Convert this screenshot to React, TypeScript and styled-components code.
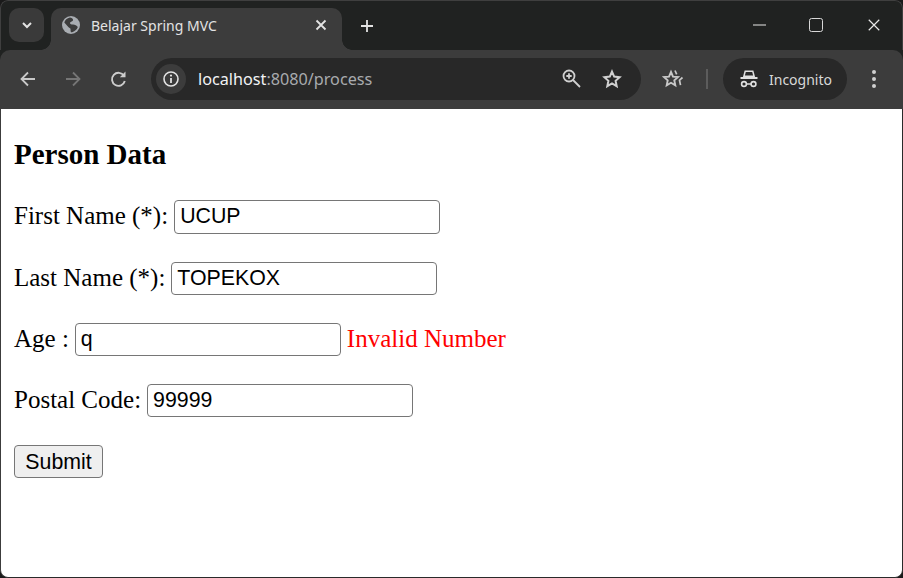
import * as React from "react";
import styled, { createGlobalStyle } from "styled-components";

const GlobalStyle = createGlobalStyle`
  html, body { margin: 0; padding: 0; height: 100%; background: #1a1a1a; overflow: hidden; }
  #root { height: 100%; }
`;

const UI_FONT = `"Noto Sans", "Open Sans", sans-serif`;

const Browser = styled.div`
  height: 578px;
  width: 903px;
  display: flex;
  flex-direction: column;
  background: #202221;
  border-radius: 8px 8px 8px 8px;
  overflow: hidden;
  box-sizing: border-box;
  font-family: ${UI_FONT};
`;

const TitleBar = styled.div`
  height: 50px;
  flex: none;
  display: flex;
  align-items: flex-start;
  padding: 8px 0 0 9px;
  box-sizing: border-box;
  background: #202221;
  border-top: 1px solid #3f3f3f;
  border-left: 1px solid #3f3f3f;
  border-right: 1px solid #3f3f3f;
  border-radius: 8px 8px 0 0;
`;

const TabSearch = styled.div`
  width: 35px;
  height: 34px;
  margin-left: -1px;
  margin-top: -1px;
  border-radius: 10px;
  background: #3a3a3a;
  display: flex;
  align-items: center;
  justify-content: center;
`;

const Tab = styled.div`
  position: relative;
  width: 291px;
  height: 42px;
  margin-left: 7px;
  margin-top: -1px;
  background: #3c3c3c;
  border-radius: 10px 10px 0 0;
  display: flex;
  align-items: center;
  padding: 0 15px 8px 11px;
  box-sizing: border-box;
  color: #e3e3e3;
  font-size: 14px;

  &::before,
  &::after {
    content: "";
    position: absolute;
    bottom: 0;
    width: 10px;
    height: 10px;
    background: radial-gradient(circle at var(--cx) 0, #202221 9.5px, #3c3c3c 10px);
  }
  &::before { left: -10px; --cx: 0; }
  &::after { right: -10px; --cx: 100%; }
`;

const TabTitle = styled.span`
  flex: 1;
  margin-left: 11px;
  white-space: nowrap;
`;

const NewTab = styled.div`
  width: 16px;
  height: 16px;
  margin: 9px 0 0 17px;
  display: flex;
`;

const WindowControls = styled.div`
  margin-left: auto;
  display: flex;
  align-items: center;
  height: 34px;
  margin-top: -1px;
  padding-right: 21px;
  gap: 42px;

  & > :last-child {
    margin-left: 2px;
  }
`;

const Toolbar = styled.div`
  height: 59px;
  flex: none;
  display: flex;
  align-items: center;
  background: #3c3c3c;
  border-radius: 10px 10px 0 0;
  padding: 0 0 1px 18px;
  box-sizing: border-box;
`;

const NavIcon = styled.div<{ $gap?: number }>`
  width: 20px;
  height: 20px;
  margin-right: ${(p) => p.$gap ?? 25}px;
  display: flex;
`;

const Omnibox = styled.div`
  width: 490px;
  height: 42px;
  border-radius: 21px;
  background: #282828;
  display: flex;
  align-items: center;
  padding: 0 19px 0 5px;
  box-sizing: border-box;
`;

const SiteInfo = styled.div`
  width: 30px;
  height: 30px;
  border-radius: 50%;
  background: #3c3c3c;
  display: flex;
  align-items: center;
  justify-content: center;
  flex: none;
`;

const Url = styled.div`
  flex: 1;
  margin-left: 12px;
  font-size: 16.2px;
  color: #a8abae;
  white-space: nowrap;
`;

const UrlHost = styled.span`
  color: #f2f3f5;
`;

const Divider = styled.div`
  width: 2px;
  height: 20px;
  background: #5c5c5c;
  margin: 0 15px 0 22px;
`;

const IncognitoPill = styled.div`
  width: 124px;
  height: 42px;
  border-radius: 21px;
  background: #282828;
  display: flex;
  align-items: center;
  padding-left: 17px;
  box-sizing: border-box;
  color: #d8d8d8;
  font-size: 14px;
  gap: 11px;
`;

const Page = styled.main`
  flex: 1;
  background: #fff;
  border-left: 1px solid #3c3c3c;
  border-right: 1px solid #2a2a2a;
  border-bottom: 1px solid #2a2a2a;
  border-radius: 0 0 8px 8px;
  padding: 0 13px;
  box-sizing: border-box;
  font-family: "Liberation Serif", serif;
  font-size: 25px;
  color: #000;
`;

const Heading = styled.h3`
  font-size: 29px;
  font-weight: bold;
  margin: 28px 0 0;
  line-height: 34px;
`;

const Row = styled.div<{ $gap: number }>`
  height: 35px;
  margin-top: ${(p) => p.$gap}px;
  padding-bottom: 2px;
  box-sizing: border-box;
  display: flex;
  align-items: center;
  white-space: pre;
`;

const TextField = styled.input<{ $tall?: boolean }>`
  width: 266px;
  height: ${(p) => (p.$tall ? 34 : 33)}px;
  box-sizing: border-box;
  margin: 2px 0 0 6px;
  padding: 1px 5px;
  border: 1px solid #767676;
  border-radius: 4px;
  background: #fff;
  font-family: "Liberation Sans", Arial, sans-serif;
  font-size: 21.33px;
  color: #000;
  outline: none;
`;

const ErrorText = styled.span`
  margin-left: 6px;
  color: #f00;
`;

const SubmitButton = styled.button`
  width: 89px;
  height: 33px;
  margin-top: 2px;
  padding: 1px 0 0;
  border: 1px solid #767676;
  border-radius: 4px;
  background: #efefef;
  font-family: "Liberation Sans", Arial, sans-serif;
  font-size: 21.33px;
  color: #000;
`;

const ToolSlot = styled.div<{ $left?: number }>`
  display: flex;
  margin-left: ${(p) => p.$left ?? 0}px;
`;

const KebabSlot = styled.div`
  display: flex;
  margin-left: 24px;
`;

const ChevronDown = () => (
  <svg width="14" height="14" viewBox="0 0 14 14" fill="none">
    <path d="M3 5l4 4 4-4" stroke="#e3e3e3" strokeWidth="2" />
  </svg>
);

const Globe = () => (
  <svg width="18" height="18" viewBox="0 0 18 18">
    <circle cx="9" cy="9" r="9" fill="#a9adb2" />
    <path d="M8 1.500C5 2 3 4 2.300 6.500l4 4.500c.7 1 2 .8 2.200 2 .2 1 0 2.500.5 3.300 3-.2 6-2.500 6.800-5.300-1-1.500-2.800-2.500-4.800-2.500-1.500 0-3-.3-3-1.500s2-1 3-2.500c.5-1-.5-2.500-3-3z" fill="#3c3c3c" />
  </svg>
);

const Close = ({ size = 12, color = "#e3e3e3", width = 1.8 }: { size?: number; color?: string; width?: number }) => (
  <svg width={size} height={size} viewBox="0 0 12 12" fill="none">
    <path d="M1.500 1.500l9 9M10.500 1.500l-9 9" stroke={color} strokeWidth={width} />
  </svg>
);

const Plus = () => (
  <svg width="16" height="16" viewBox="0 0 16 16" fill="none">
    <path d="M8 2v12M2 8h12" stroke="#e3e3e3" strokeWidth="1.8" />
  </svg>
);

const ArrowLeft = ({ color }: { color: string }) => (
  <svg width="20" height="20" viewBox="0 0 20 20" fill="none">
    <path d="M17 10H4M10 3.500L3.500 10l6.500 6.500" stroke={color} strokeWidth="1.8" />
  </svg>
);

const ArrowRight = ({ color }: { color: string }) => (
  <svg width="20" height="20" viewBox="0 0 20 20" fill="none">
    <path d="M3 10h13M10 3.500l6.500 6.500-6.500 6.500" stroke={color} strokeWidth="1.8" />
  </svg>
);

const Reload = () => (
  <svg width="20" height="20" viewBox="0 0 20 20" fill="none">
    <path d="M15.800 12a6.500 6.500 0 1 1-.8-5.200" stroke="#cdcdcd" strokeWidth="1.900" />
    <path d="M16.500 2.500v5.700h-5.700z" fill="#cdcdcd" />
  </svg>
);

const Info = () => (
  <svg width="18" height="18" viewBox="0 0 18 18" fill="none">
    <circle cx="9" cy="9" r="7" stroke="#e3e3e3" strokeWidth="1.600" />
    <path d="M9 8v5" stroke="#e3e3e3" strokeWidth="1.800" />
    <circle cx="9" cy="5.600" r="1.100" fill="#e3e3e3" />
  </svg>
);

const ZoomIn = () => (
  <svg width="20" height="20" viewBox="0 0 20 20" fill="none">
    <circle cx="7" cy="7" r="5.500" stroke="#d0d0d0" strokeWidth="1.800" />
    <path d="M11 11l7 7" stroke="#d0d0d0" strokeWidth="1.800" />
    <path d="M7 4.300v5.400M4.300 7h5.400" stroke="#d0d0d0" strokeWidth="1.800" />
  </svg>
);

const Star = () => (
  <svg width="20" height="20" viewBox="0 0 20 20" fill="none">
    <path d="M10 2.600l2.200 5 5.400.6-4 3.600 1.100 5.400L10 14.500l-4.700 2.700 1.100-5.400-4-3.600 5.400-.6z" stroke="#d0d0d0" strokeWidth="2" strokeLinejoin="miter" />
  </svg>
);

const ReadingStar = () => (
  <svg width="22" height="20" viewBox="0 0 22 20" fill="none">
    <path d="M9 3l2 4.600 5 .5-3.700 3.300 1 4.900L9 13.800l-4.300 2.500 1-4.900L2 8.100l5-.5z" stroke="#c8c8c8" strokeWidth="1.900" />
    <path d="M13 1.500l1.700 3.800M20.500 8.500l-3 2.700 1 5" stroke="#c8c8c8" strokeWidth="1.700" />
  </svg>
);

const Spy = () => (
  <svg width="18" height="18" viewBox="0 0 18 18" fill="none">
    <path d="M5.200 1.200h7.600l1.300 5H3.900z" stroke="#e0e0e0" strokeWidth="1.500" />
    <path d="M.5 8h17" stroke="#e0e0e0" strokeWidth="2" />
    <circle cx="4" cy="14" r="2.400" stroke="#e0e0e0" strokeWidth="1.600" />
    <circle cx="13.500" cy="14" r="2.400" stroke="#e0e0e0" strokeWidth="1.600" />
    <path d="M6.500 14h4.500" stroke="#e0e0e0" strokeWidth="1.500" />
  </svg>
);

const Kebab = () => (
  <svg width="6" height="20" viewBox="0 0 6 20">
    <circle cx="3" cy="3" r="2" fill="#d0d0d0" />
    <circle cx="3" cy="10" r="2" fill="#d0d0d0" />
    <circle cx="3" cy="17" r="2" fill="#d0d0d0" />
  </svg>
);

const Minimize = () => (
  <svg width="14" height="14" viewBox="0 0 14 14" fill="none">
    <path d="M0 7h13" stroke="#e8e8e8" strokeWidth="1" />
  </svg>
);

const Maximize = () => (
  <svg width="14" height="14" viewBox="0 0 14 14" fill="none">
    <rect x=".5" y=".5" width="13" height="13" rx="2" stroke="#d8d8d8" strokeWidth="1" />
  </svg>
);

export default function App() {
  return (
    <>
      <GlobalStyle />
      <Browser>
        <TitleBar>
          <TabSearch>
            <ChevronDown />
          </TabSearch>
          <Tab>
            <Globe />
            <TabTitle>Belajar Spring MVC</TabTitle>
            <Close />
          </Tab>
          <NewTab>
            <Plus />
          </NewTab>
          <WindowControls>
            <Minimize />
            <Maximize />
            <Close size={14} color="#e8e8e8" width={1} />
          </WindowControls>
        </TitleBar>
        <Toolbar>
          <NavIcon>
            <ArrowLeft color="#c8c8c8" />
          </NavIcon>
          <NavIcon $gap={26}>
            <ArrowRight color="#757575" />
          </NavIcon>
          <NavIcon $gap={22}>
            <Reload />
          </NavIcon>
          <Omnibox>
            <SiteInfo>
              <Info />
            </SiteInfo>
            <Url>
              <UrlHost>localhost</UrlHost>:8080/process
            </Url>
            <ToolSlot>
              <ZoomIn />
            </ToolSlot>
            <ToolSlot $left={20}>
              <Star />
            </ToolSlot>
          </Omnibox>
          <ToolSlot $left={21}>
            <ReadingStar />
          </ToolSlot>
          <Divider />
          <IncognitoPill>
            <Spy />
            Incognito
          </IncognitoPill>
          <KebabSlot>
            <Kebab />
          </KebabSlot>
        </Toolbar>
        <Page>
          <Heading>Person Data</Heading>
          <Row $gap={28}>
            First Name (*):<TextField $tall defaultValue="UCUP" />
          </Row>
          <Row $gap={27}>
            Last Name (*):<TextField defaultValue="TOPEKOX" />
          </Row>
          <Row $gap={26}>
            Age :<TextField defaultValue="q" />
            <ErrorText>Invalid Number</ErrorText>
          </Row>
          <Row $gap={26}>
            Postal Code:<TextField defaultValue="99999" />
          </Row>
          <Row $gap={26}>
            <SubmitButton type="button">Submit</SubmitButton>
          </Row>
        </Page>
      </Browser>
    </>
  );
}
